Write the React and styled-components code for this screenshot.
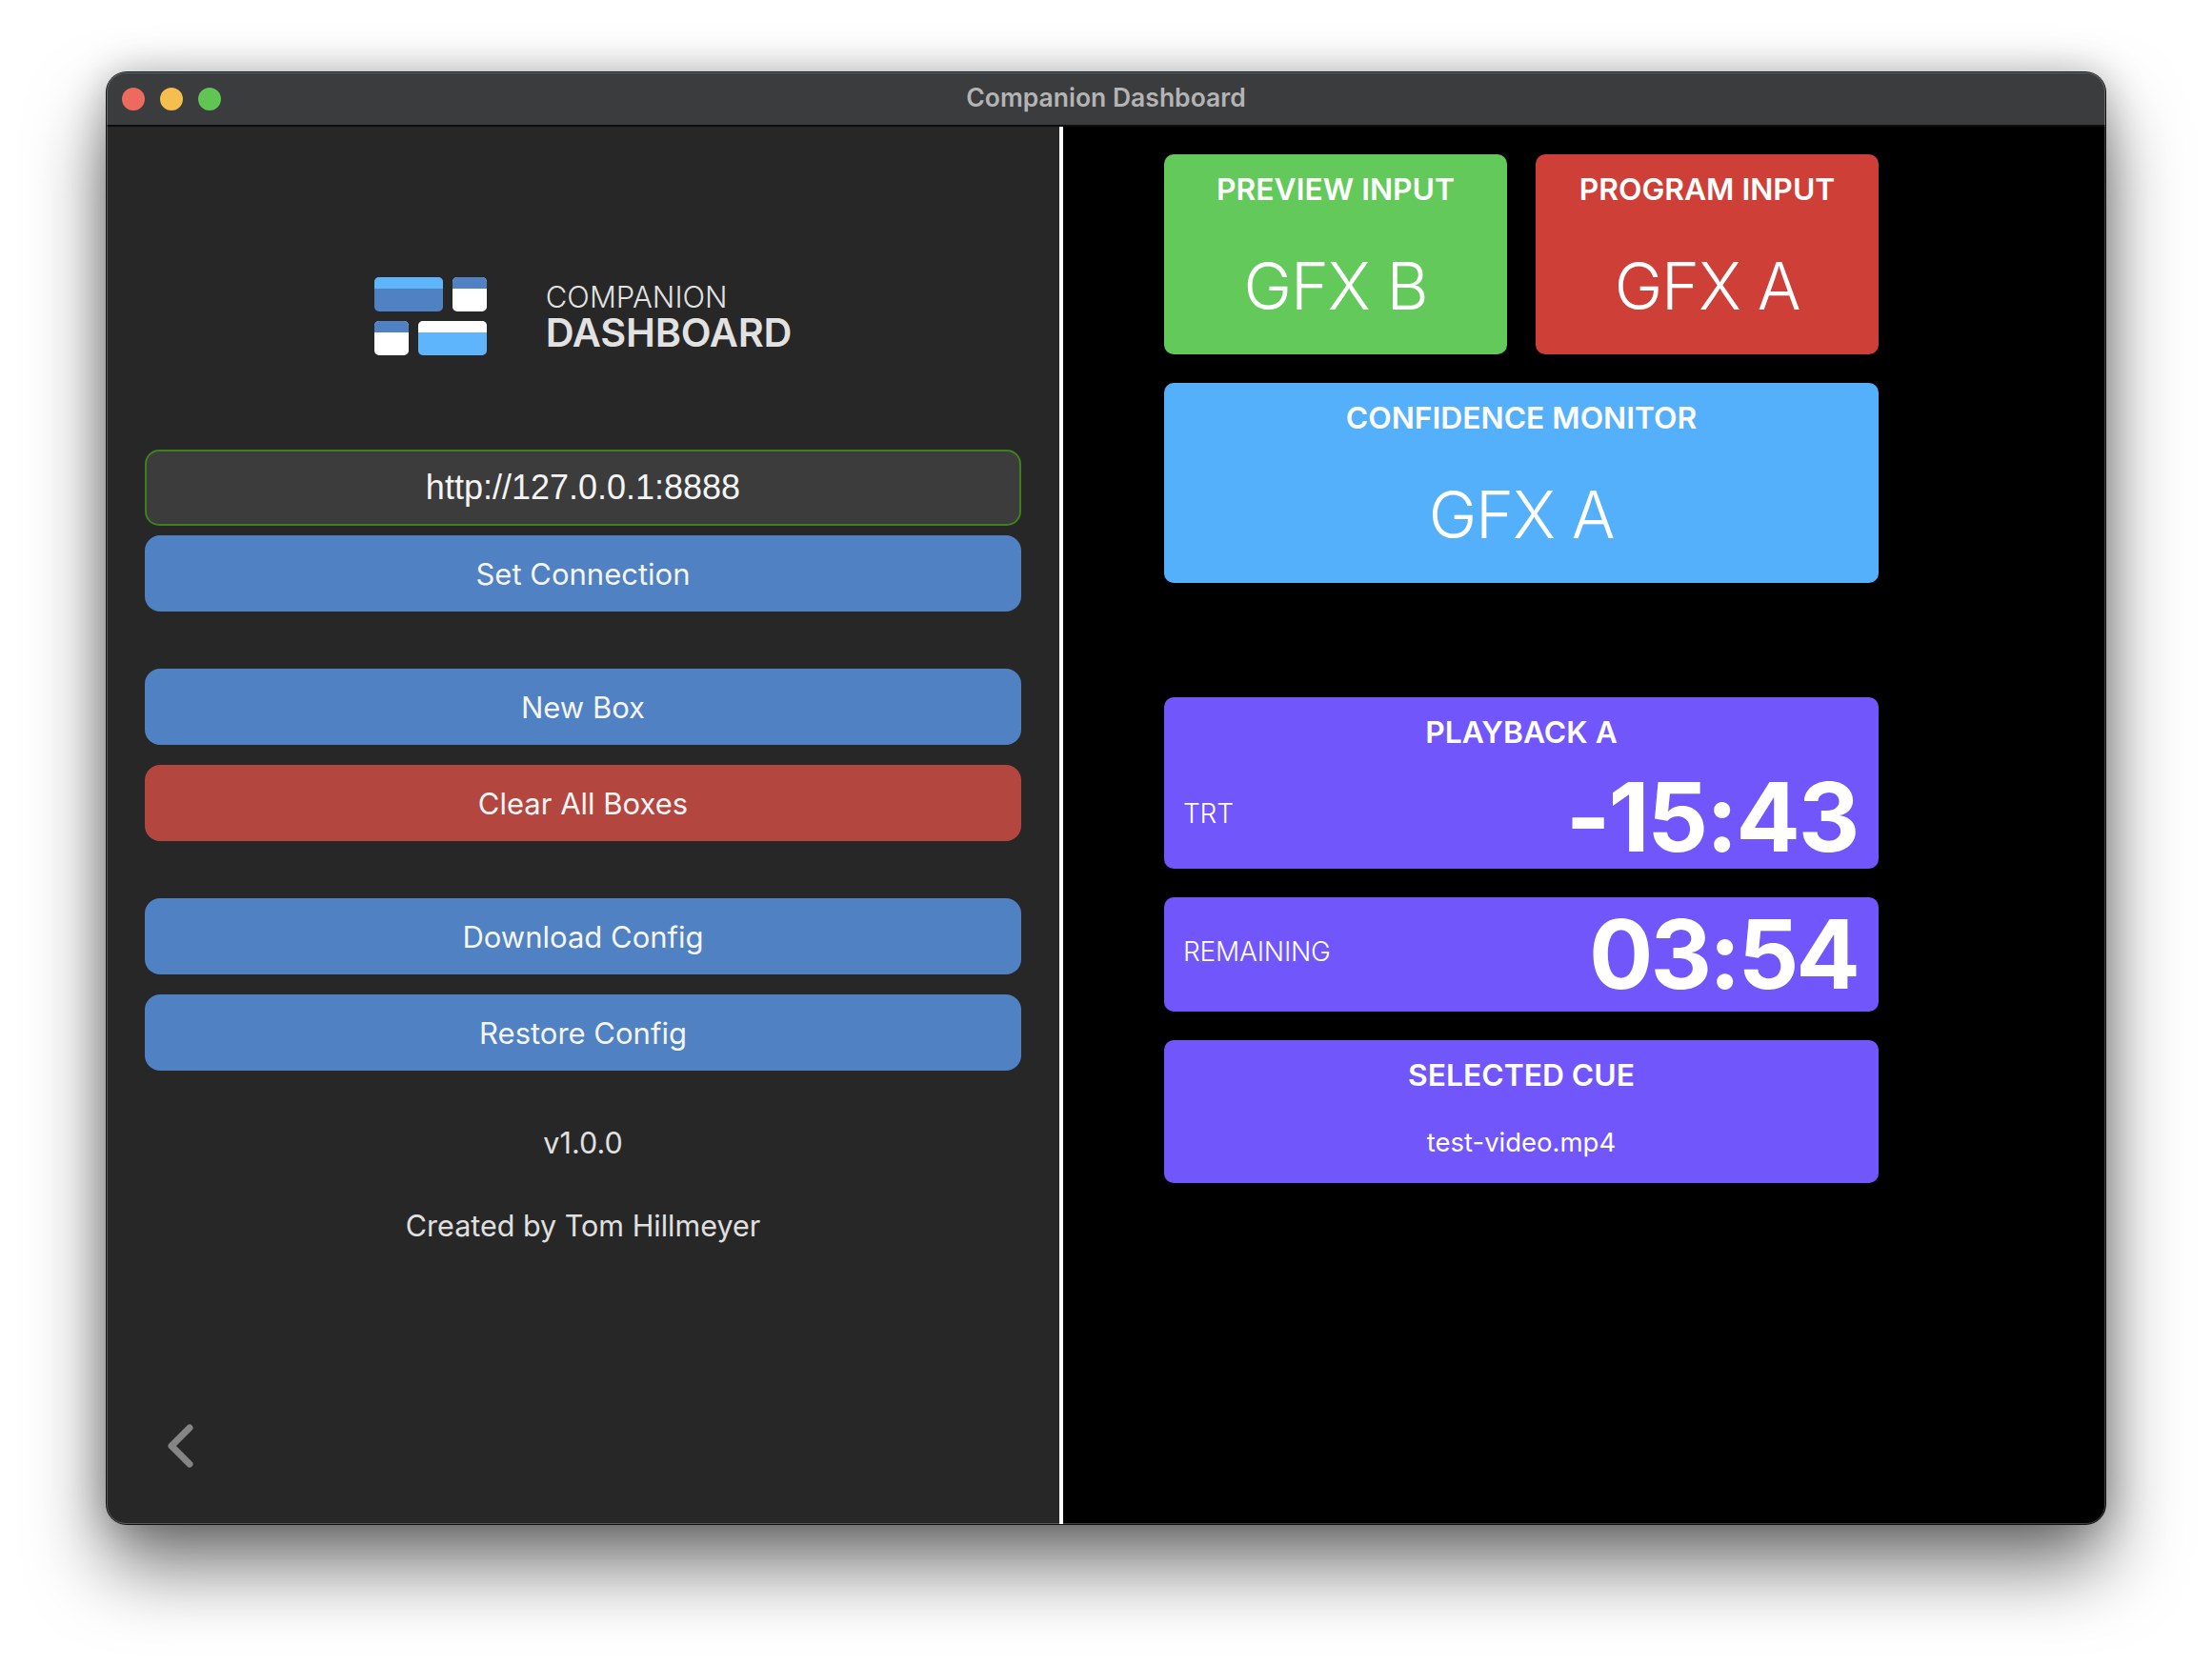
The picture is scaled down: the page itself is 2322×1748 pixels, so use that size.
import React from "react";
import styled, { createGlobalStyle } from "styled-components";

const Global = createGlobalStyle`
  html, body { margin: 0; padding: 0; background: #fff; overflow: hidden; }
  #root { width: 2322px; height: 1748px; }
  * { box-sizing: border-box; }
`;
const Page = styled.div`
  width: 2322px; height: 1748px; padding: 76px 112px 148px 112px;
  background: #fff; font-family: Inter, sans-serif; color: #fff;
`;
const Win = styled.div`
  position: relative; width: 2098px; height: 1524px; border-radius: 20px; overflow: hidden;
  display: flex; flex-direction: column; background: #000;
  &::after { content: ""; position: absolute; inset: 0; border-radius: 20px; pointer-events: none;
    box-shadow: inset 0 0 0 1px rgba(255,255,255,.24); }
`;
const Shadow = styled.div`
  border-radius: 21px; box-shadow: 0 0 0 1px #111, 0 44px 80px rgba(0,0,0,.55), 0 0 40px rgba(0,0,0,.25);
`;
const TitleBar = styled.div`
  height: 57px; flex: none; background: #3b3c3e; border-bottom: 2px solid #0d0d0d; display: flex;
  align-items: center; justify-content: center; position: relative; padding-bottom: 3px;
`;
const Lights = styled.div`
  position: absolute; left: 16px; top: 16px; display: flex; gap: 16px;
`;
const Light = styled.span`
  width: 24px; height: 24px; border-radius: 50%; background: ${p => p.$c};
`;
const Title = styled.div`
  font-size: 26.5px; font-weight: 600; color: #b4b4b4;
`;
const Body = styled.div`
  flex: 1; display: flex; min-height: 0;
`;
const Left = styled.div`
  width: 1000px; flex: none; background: #272727; padding: 158px 40px 0; display: flex; flex-direction: column;
  position: relative;
`;
const Divider = styled.div`
  width: 4px; flex: none; background: #fff;
`;
const Brand = styled.div`
  display: flex; align-items: center; justify-content: center; gap: 62px; height: 82px; margin-bottom: 99px;
`;
const BrandText = styled.div`
  display: flex; flex-direction: column; color: #e2e2e2; padding-bottom: 2px;
`;
const BrandTop = styled.span`
  font-size: 31px; font-weight: 300; line-height: 35px;
`;
const BrandBottom = styled.span`
  font-size: 41.4px; font-weight: 600; line-height: 40px; letter-spacing: -0.2px;
`;
const UrlInput = styled.div`
  height: 80px; background: #3c3c3c; border: 2px solid #3f7f1f; border-radius: 15px;
  display: flex; align-items: center; justify-content: center;
  font-family: "Liberation Sans", Arial, sans-serif; font-size: 36px; color: #f4f4f4;
`;
const Btn = styled.div`
  height: 80px; border-radius: 16px; background: ${p => p.$bg || "#4f81c3"};
  margin-top: ${p => p.$mt}px; display: flex; align-items: center; justify-content: center;
  font-size: 31px; color: #f5f5f5;
`;
const Note = styled.div`
  text-align: center; font-size: 30.5px; color: #e0e0e0; line-height: 40px; margin-top: ${p => p.$mt}px;
`;
const Back = styled.svg`
  position: absolute; left: 62px; bottom: 57px; width: 32px; height: 50px;
`;
const Right = styled.div`
  flex: 1; background: #000; padding: 29px 0 0 106px; display: flex; flex-direction: column;
  gap: 30px; align-items: flex-start;
`;
const Row = styled.div`
  display: flex; gap: 30px;
`;
const Tile = styled.div`
  width: ${p => p.$w}px; height: ${p => p.$h}px; border-radius: 10px; background: ${p => p.$bg};
  display: flex; flex-direction: column; align-items: center; margin-top: ${p => p.$mt || 0}px;
`;
const TileHead = styled.div`
  margin-top: 18px; font-size: 31.8px; font-weight: 600; line-height: 38px; color: #fff;
`;
const TileValue = styled.div`
  margin-top: 37px; font-size: 68px; font-weight: 300; line-height: 90px; color: #fff; letter-spacing: -1.2px;
`;
const TimerRow = styled.div`
  align-self: stretch; flex: 1; display: flex; align-items: center; justify-content: space-between;
  padding: ${p => p.$pt || 0}px 22px ${p => p.$pb || 0}px 20px;
`;
const TimerLabel = styled.span`
  font-size: 28px; font-weight: 300; letter-spacing: -0.2px; margin-top: ${p => p.$mt || 0}px;
`;
const TimerValue = styled.span`
  font-size: 100px; font-weight: 700; line-height: 110px; letter-spacing: ${p => p.$ls}px;
`;
const CueValue = styled.div`
  margin-top: 32px; font-size: 27.5px; font-weight: 400; line-height: 38px;
`;

const Logo = () => (
  <svg width="118" height="82" viewBox="0 0 118 82">
    <defs>
      <clipPath id="a"><rect width="72" height="36" rx="5" /></clipPath>
      <clipPath id="b"><rect x="82" width="36" height="36" rx="5" /></clipPath>
      <clipPath id="c"><rect y="46" width="36" height="36" rx="5" /></clipPath>
      <clipPath id="d"><rect x="46" y="46" width="72" height="36" rx="5" /></clipPath>
    </defs>
    <g clipPath="url(#a)"><rect width="72" height="36" fill="#4f81c3" /><rect width="72" height="12" fill="#5eb5fb" /></g>
    <g clipPath="url(#b)"><rect x="82" width="36" height="36" fill="#fff" /><rect x="82" width="36" height="12" fill="#4f81c3" /></g>
    <g clipPath="url(#c)"><rect y="46" width="36" height="36" fill="#fff" /><rect y="46" width="36" height="12" fill="#4f81c3" /></g>
    <g clipPath="url(#d)"><rect x="46" y="46" width="72" height="36" fill="#5eb5fb" /><rect x="46" y="46" width="72" height="12" fill="#fff" /></g>
  </svg>
);

export default function App() {
  return (
    <Page>
      <Global />
      <Shadow>
        <Win>
          <TitleBar>
            <Lights>
              <Light $c="#ed6a5e" /><Light $c="#f4bf4f" /><Light $c="#61c554" />
            </Lights>
            <Title>Companion Dashboard</Title>
          </TitleBar>
          <Body>
            <Left>
              <Brand>
                <Logo />
                <BrandText>
                  <BrandTop>COMPANION</BrandTop>
                  <BrandBottom>DASHBOARD</BrandBottom>
                </BrandText>
              </Brand>
              <UrlInput>http://127.0.0.1:8888</UrlInput>
              <Btn $mt={10}>Set Connection</Btn>
              <Btn $mt={60}>New Box</Btn>
              <Btn $mt={21} $bg="#b3463f">Clear All Boxes</Btn>
              <Btn $mt={60}>Download Config</Btn>
              <Btn $mt={21}>Restore Config</Btn>
              <Note $mt={56}>v1.0.0</Note>
              <Note $mt={47}>Created by Tom Hillmeyer</Note>
              <Back viewBox="0 0 32 50">
                <path d="M25 6 L6 25 L25 44" fill="none" stroke="#858585" strokeWidth="7" strokeLinecap="round" strokeLinejoin="round" />
              </Back>
            </Left>
            <Divider />
            <Right>
              <Row>
                <Tile $w={360} $h={210} $bg="#62c95a"><TileHead>PREVIEW INPUT</TileHead><TileValue>GFX B</TileValue></Tile>
                <Tile $w={360} $h={210} $bg="#cd3f37"><TileHead>PROGRAM INPUT</TileHead><TileValue>GFX A</TileValue></Tile>
              </Row>
              <Tile $w={750} $h={210} $bg="#54b0fb"><TileHead>CONFIDENCE MONITOR</TileHead><TileValue>GFX A</TileValue></Tile>
              <Tile $w={750} $h={180} $bg="#7156fb" $mt={90}>
                <TileHead>PLAYBACK A</TileHead>
                <TimerRow $pt={15}><TimerLabel $mt={-8}>TRT</TimerLabel><TimerValue $ls={-2.2}>-15:43</TimerValue></TimerRow>
              </Tile>
              <Tile $w={750} $h={120} $bg="#7156fb">
                <TimerRow $pb={1}><TimerLabel $mt={-5}>REMAINING</TimerLabel><TimerValue $ls={-3}>03:54</TimerValue></TimerRow>
              </Tile>
              <Tile $w={750} $h={150} $bg="#7156fb">
                <TileHead>SELECTED CUE</TileHead>
                <CueValue>test-video.mp4</CueValue>
              </Tile>
            </Right>
          </Body>
        </Win>
      </Shadow>
    </Page>
  );
}
